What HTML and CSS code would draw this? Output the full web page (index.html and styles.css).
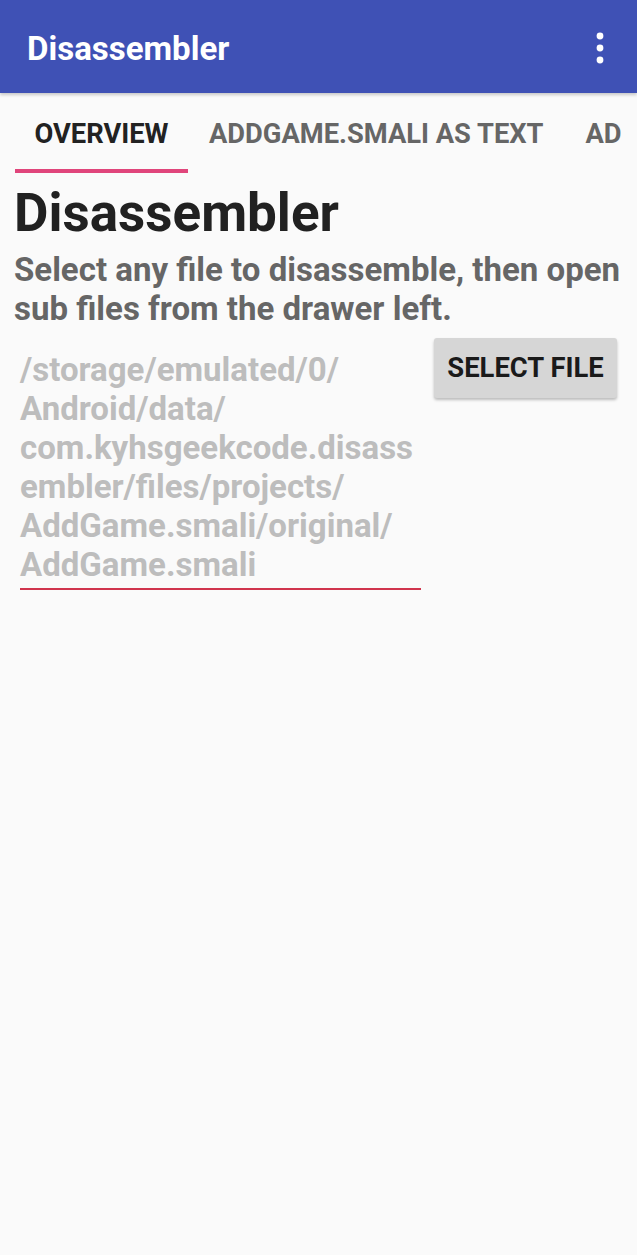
FILE: index.html
```html
<!DOCTYPE html>
<html lang="en">
<head>
  <meta charset="UTF-8">
  <meta name="viewport" content="width=device-width, initial-scale=1.0">
  <title>Disassembler</title>
  <link rel="stylesheet" href="styles.css">
</head>
<body>
  <header class="appbar">
    <div class="appbar-title">Disassembler</div>
    <svg class="menu-icon" width="12" height="32" viewBox="0 0 12 32">
      <circle cx="6" cy="4" r="3.4" fill="#fff"/>
      <circle cx="6" cy="16" r="3.4" fill="#fff"/>
      <circle cx="6" cy="28" r="3.4" fill="#fff"/>
    </svg>
  </header>

  <nav class="tabs">
    <div class="tab active">OVERVIEW</div>
    <div class="tab">ADDGAME.SMALI AS TEXT</div>
    <div class="tab">ADDGAME.SMALI</div>
  </nav>

  <main class="content">
    <h1 class="heading">Disassembler</h1>
    <p class="subtitle">Select any file to disassemble, then open sub files from the drawer left.</p>

    <div class="file-row">
      <div class="path-field">/storage/emulated/0/<br>Android/data/<br>com.kyhsgeekcode.disass<br>embler/files/projects/<br>AddGame.smali/original/<br>AddGame.smali</div>
      <button class="select-btn">SELECT FILE</button>
    </div>
  </main>
</body>
</html>
```

FILE: styles.css
```css
body {
  margin: 0;
  padding: 0;
  font-family: Roboto, "Noto Sans", sans-serif;
  background-color: #fafafa;
  width: 637px;
  height: 1255px;
  overflow: hidden;
}
.appbar {
  height: 93px;
  background-color: #3f51b5;
  display: flex;
  align-items: center;
  justify-content: space-between;
  padding: 0 31px 0 27px;
  box-shadow: 0 2px 3px rgba(0, 0, 0, 0.2);
  position: relative;
  z-index: 1;
}
.appbar-title {
  color: #fff;
  font-size: 33px;
  font-weight: 700;
  margin-top: 4px;
}
.menu-icon {
  margin-top: 3px;
}
.tabs {
  display: flex;
  width: 622px;
  height: 80px;
  padding-left: 15px;
  box-sizing: border-box;
  white-space: nowrap;
  overflow: hidden;
}
.tab {
  flex: none;
  padding: 6px 21px 4px;
  display: flex;
  align-items: center;
  font-size: 27.3px;
  font-weight: 700;
  color: #666;
  box-sizing: border-box;
}
.tab:first-child {
  width: 173px;
  justify-content: center;
  padding: 6px 0 0;
}
.tab.active {
  color: #222;
  border-bottom: 4px solid #e0457b;
}
.content {
  padding: 0 4px 0 14px;
}
.heading {
  margin: 10px 0 0;
  font-size: 53px;
  font-weight: 700;
  color: #212121;
  line-height: 60px;
}
.subtitle {
  margin: 7px 0 0;
  font-size: 33px;
  font-weight: 700;
  color: #666;
  line-height: 39px;
}
.file-row {
  display: flex;
  align-items: flex-start;
  justify-content: space-between;
  margin-top: 7px;
}
.path-field {
  width: 401px;
  margin-left: 6px;
  padding: 15px 0 4px;
  border-bottom: 2px solid #d0344d;
  font-size: 33px;
  font-weight: 700;
  color: #bdbdbd;
  line-height: 39px;
  white-space: nowrap;
}
.select-btn {
  margin-top: 3px;
  margin-right: 16px;
  width: 183px;
  height: 60px;
  background-color: #d6d6d6;
  border: none;
  border-radius: 3px;
  box-shadow: 0 2px 3px rgba(0, 0, 0, 0.25);
  font-family: Roboto, "Noto Sans", sans-serif;
  font-size: 27.4px;
  font-weight: 700;
  color: #1a1a1a;
  padding: 0;
}
```
